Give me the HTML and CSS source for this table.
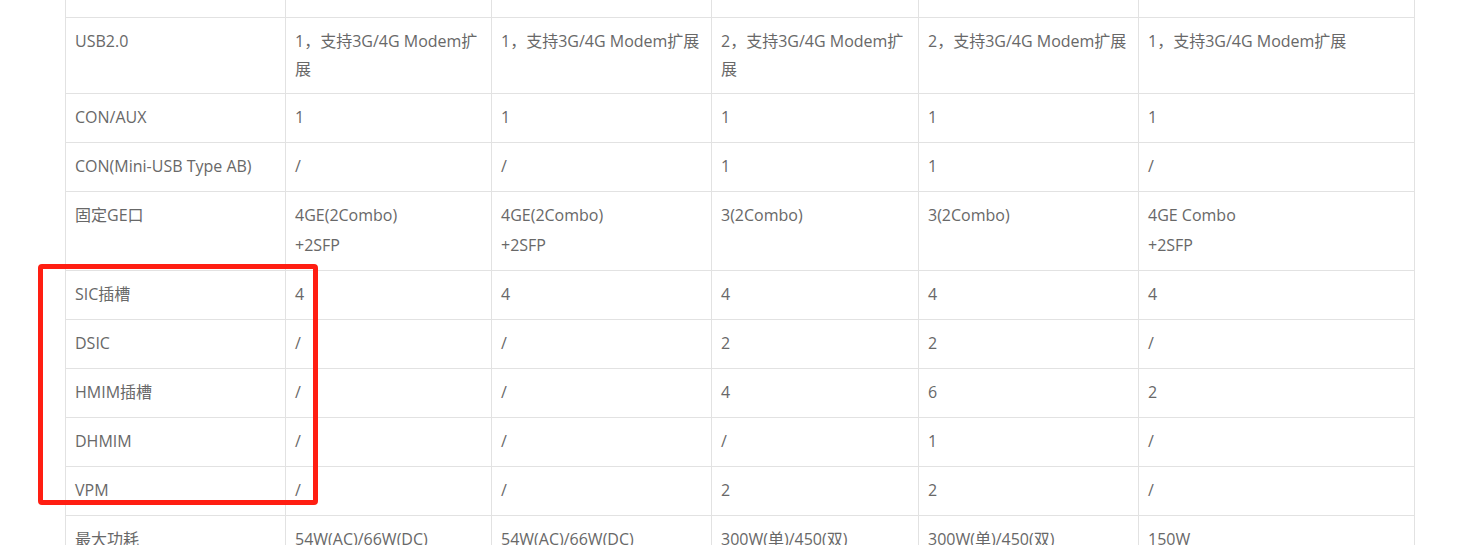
FILE: index.html
```html
<!DOCTYPE html>
<html lang="zh-CN">
<head>
<meta charset="utf-8">
<title>规格对比</title>
<link rel="stylesheet" href="styles.css">
</head>
<body>
<div class="viewport">
  <div class="sheet">
    <table class="spec">
      <colgroup>
        <col class="c1"><col class="c2"><col class="c3"><col class="c4"><col class="c5"><col class="c6">
      </colgroup>
      <tbody>
        <tr class="cut"><td></td><td></td><td></td><td></td><td></td><td></td></tr>
        <tr class="wrap2">
          <td>USB2.0</td>
          <td>1，支持3G/4G Modem扩展</td>
          <td>1，支持3G/4G Modem扩展</td>
          <td>2，支持3G/4G Modem扩展</td>
          <td>2，支持3G/4G Modem扩展</td>
          <td>1，支持3G/4G Modem扩展</td>
        </tr>
        <tr>
          <td>CON/AUX</td><td>1</td><td>1</td><td>1</td><td>1</td><td>1</td>
        </tr>
        <tr>
          <td>CON(Mini-USB Type AB)</td><td>/</td><td>/</td><td>1</td><td>1</td><td>/</td>
        </tr>
        <tr class="tall">
          <td>固定GE口</td>
          <td>4GE(2Combo)<br>+2SFP</td>
          <td>4GE(2Combo)<br>+2SFP</td>
          <td>3(2Combo)</td>
          <td>3(2Combo)</td>
          <td>4GE Combo<br>+2SFP</td>
        </tr>
        <tr>
          <td>SIC插槽</td><td>4</td><td>4</td><td>4</td><td>4</td><td>4</td>
        </tr>
        <tr>
          <td>DSIC</td><td>/</td><td>/</td><td>2</td><td>2</td><td>/</td>
        </tr>
        <tr>
          <td>HMIM插槽</td><td>/</td><td>/</td><td>4</td><td>6</td><td>2</td>
        </tr>
        <tr>
          <td>DHMIM</td><td>/</td><td>/</td><td>/</td><td>1</td><td>/</td>
        </tr>
        <tr>
          <td>VPM</td><td>/</td><td>/</td><td>2</td><td>2</td><td>/</td>
        </tr>
        <tr>
          <td>最大功耗</td>
          <td>54W(AC)/66W(DC)</td>
          <td>54W(AC)/66W(DC)</td>
          <td>300W(单)/450(双)</td>
          <td>300W(单)/450(双)</td>
          <td>150W</td>
        </tr>
      </tbody>
    </table>
    <div class="highlight"></div>
  </div>
</div>
</body>
</html>
```

FILE: styles.css
```css
html, body {
  margin: 0;
  padding: 0;
  background: #ffffff;
}

.viewport {
  height: 545px;
  overflow: hidden;
}

.sheet {
  position: relative;
  display: flow-root;
  padding-left: 65px;
}

.spec {
  border-collapse: collapse;
  table-layout: fixed;
  width: 1349px;
  margin-top: -32px;
  font-family: "Open Sans", "Noto Sans CJK SC", sans-serif;
  font-size: 16px;
  color: #686868;
}

.c1 { width: 220px; }
.c2 { width: 206px; }
.c3 { width: 220px; }
.c4 { width: 207px; }
.c5 { width: 220px; }
.c6 { width: 276px; }

.spec td {
  border: 1px solid #e2e2e2;
  padding: 9px 10px 11px 9px;
  line-height: 28px;
  vertical-align: top;
  text-align: left;
}

.spec tr.cut td {
  height: 28px;
}

.spec tr.wrap2 td {
  padding-top: 9px;
  padding-bottom: 10px;
}

.spec tr.tall td {
  padding-top: 8px;
  padding-bottom: 10px;
  line-height: 30px;
}

.highlight {
  position: absolute;
  left: 38px;
  top: 264px;
  width: 270px;
  height: 231px;
  border: 5px solid #ff1e12;
  border-radius: 4px;
}
```
